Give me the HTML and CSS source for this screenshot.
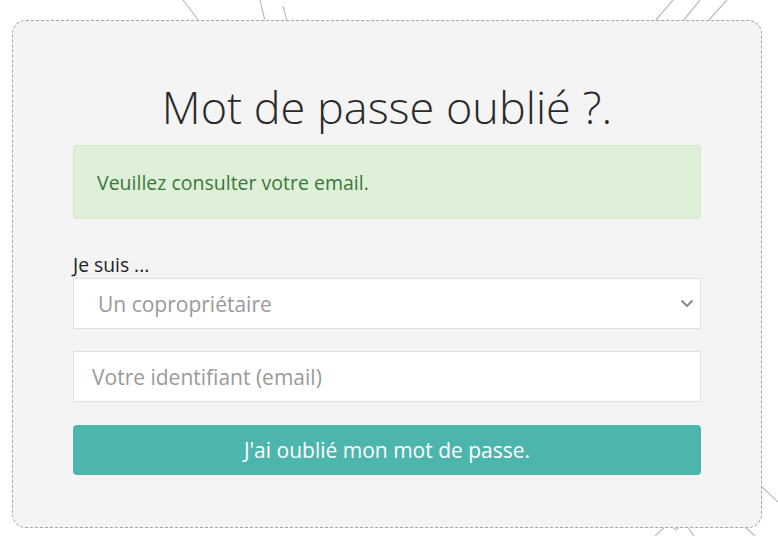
FILE: index.html
```html
<!DOCTYPE html>
<html lang="fr">
<head>
<meta charset="utf-8">
<title>Mot de passe oublié</title>
<link rel="stylesheet" href="styles.css">
</head>
<body>
<svg class="deco" width="778" height="536" viewBox="0 0 778 536" aria-hidden="true">
  <g stroke="#bdbdbd" stroke-width="1.2" fill="none">
    <line x1="183" y1="0" x2="199" y2="21"/>
    <line x1="260" y1="0" x2="265" y2="21"/>
    <line x1="283" y1="6" x2="287" y2="21"/>
    <line x1="673" y1="0" x2="655" y2="21"/>
    <line x1="700" y1="0" x2="683" y2="21"/>
    <line x1="727" y1="0" x2="708" y2="21"/>
    <line x1="762" y1="487" x2="778" y2="502"/>
    <line x1="745" y1="527" x2="755" y2="536"/>
    <path d="M655 536 L668 524 L676 530 L684 522 L694 536"/>
  </g>
</svg>
<main class="card">
  <h1 class="title">Mot de passe oublié ?.</h1>
  <div class="alert">Veuillez consulter votre email.</div>
  <form class="form">
    <label class="label" for="type">Je suis ...</label>
    <div class="select-wrap">
      <select id="type" class="select">
        <option>Un copropriétaire</option>
      </select>
      <svg class="chevron" width="14" height="9" viewBox="0 0 14 9"><path d="M1.5 1.5 L7 7 L12.5 1.5" stroke="#8a8a8a" stroke-width="2" fill="none"/></svg>
    </div>
    <input class="input" type="text" placeholder="Votre identifiant (email)">
    <button class="btn" type="button">J'ai oublié mon mot de passe.</button>
  </form>
</main>
</body>
</html>
```
FILE: styles.css
```css
html, body {
  margin: 0;
  padding: 0;
  background: #ffffff;
}
body {
  position: relative;
  width: 778px;
  height: 536px;
  overflow: hidden;
  font-family: "Open Sans", "Noto Sans", sans-serif;
  color: #222;
}
.deco {
  position: absolute;
  left: 0;
  top: 0;
  z-index: 0;
}
.card {
  position: relative;
  z-index: 1;
  box-sizing: border-box;
  margin: 20px 0 0 12px;
  width: 750px;
  height: 508px;
  background: #f4f4f4;
  border: 1px dashed #a6a6a6;
  border-radius: 14px;
  padding: 0 60px;
}
.title {
  margin: 56px 0 0;
  font-weight: 300;
  font-size: 45px;
  line-height: 60px;
  text-align: center;
  color: #2a2a2a;
}
.alert {
  margin-top: 8px;
  height: 74px;
  box-sizing: border-box;
  background: #dff0d8;
  border: 1px solid #d3e8c8;
  border-radius: 4px;
  color: #3c763d;
  font-size: 19.5px;
  padding: 0 23px;
  display: flex;
  align-items: center;
}
.form {
  display: flex;
  flex-direction: column;
  margin-top: 34px;
}
.label {
  font-size: 19.3px;
  line-height: 24px;
  color: #222;
}
.select-wrap {
  position: relative;
  margin-top: 1px;
}
.select {
  display: block;
  width: 100%;
  height: 51px;
  box-sizing: border-box;
  border: 1px solid #e1e1e1;
  border-radius: 0;
  background: #fff;
  font-family: inherit;
  font-size: 21px;
  color: #9a9a9a;
  padding: 0 24px;
  appearance: none;
  -webkit-appearance: none;
  outline: none;
}
.chevron {
  position: absolute;
  right: 7px;
  top: 21px;
}
.input {
  margin-top: 22px;
  height: 51px;
  box-sizing: border-box;
  border: 1px solid #e1e1e1;
  background: #fff;
  font-family: inherit;
  font-size: 21px;
  padding: 0 18px;
  outline: none;
  color: #333;
}
.input::placeholder {
  color: #9a9a9a;
}
.btn {
  margin-top: 23px;
  height: 50px;
  border: 0;
  border-radius: 4px;
  background: #4db6ac;
  color: #fff;
  font-family: inherit;
  font-size: 21px;
  cursor: pointer;
}
```
